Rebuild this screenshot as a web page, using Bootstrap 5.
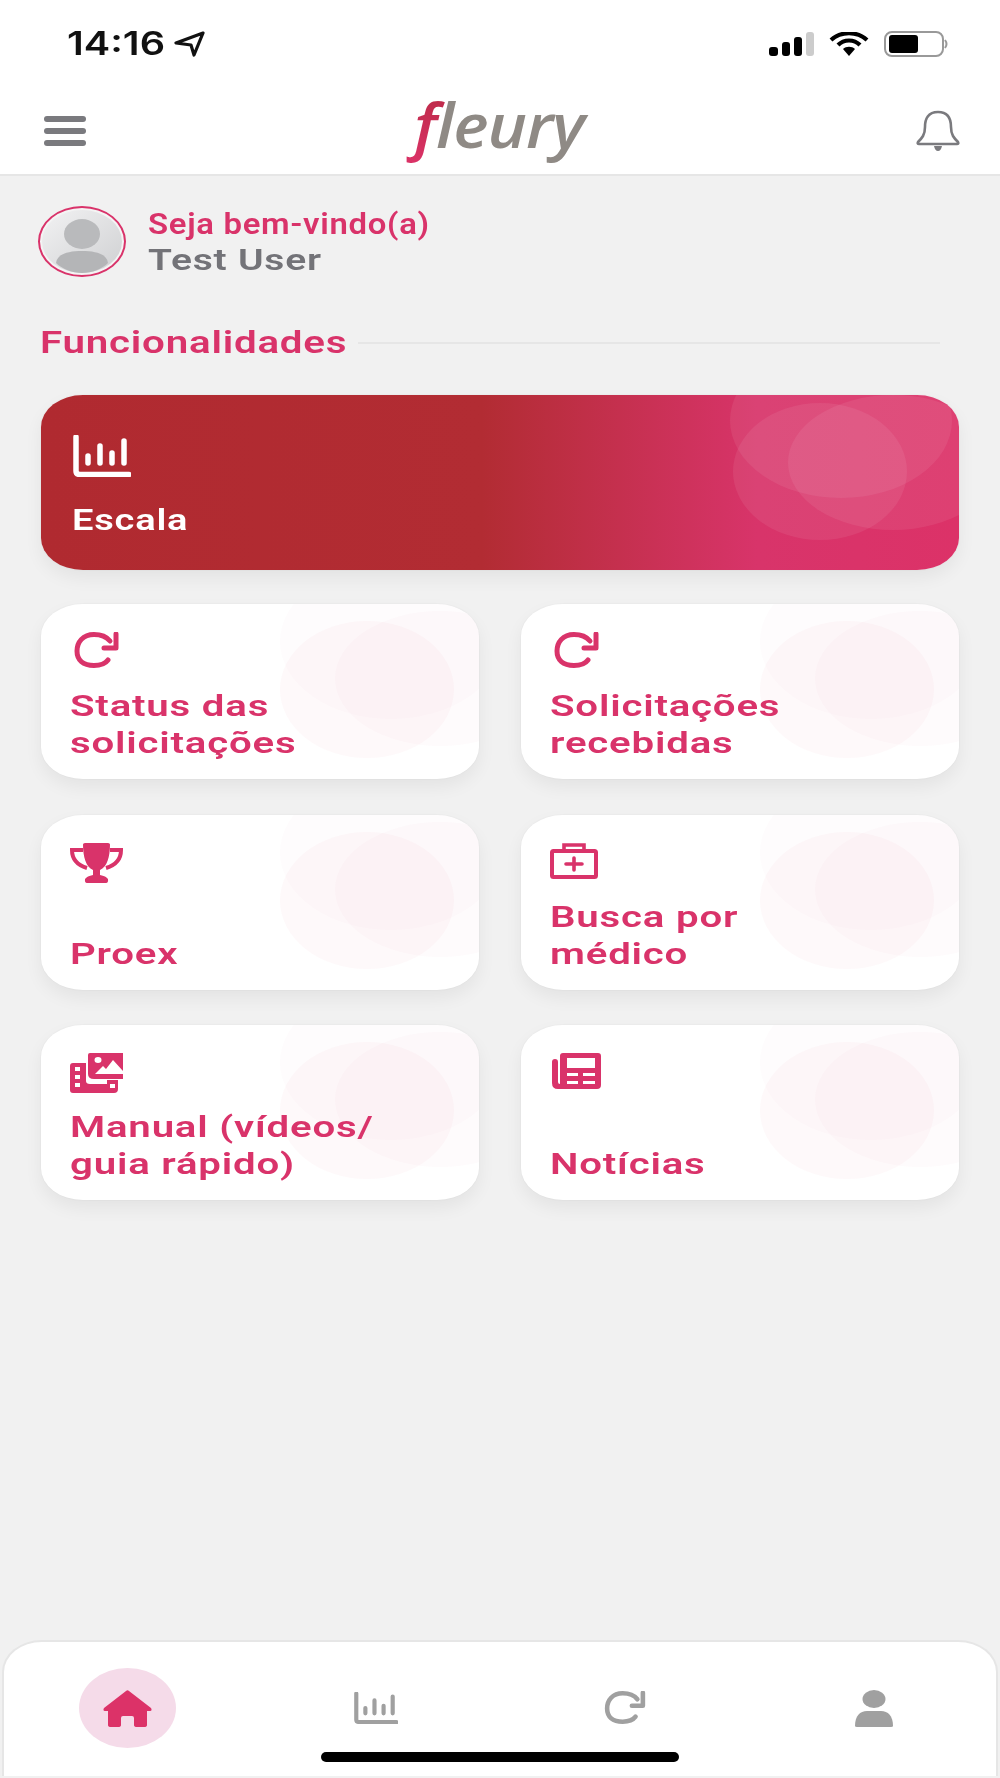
<!DOCTYPE html>
<html lang="pt-BR">
<head>
  <meta charset="UTF-8" />
  <meta name="viewport" content="width=device-width, initial-scale=1" />
  <title>Fleury</title>
  <link href="https://cdn.jsdelivr.net/npm/bootstrap@5.3.2/dist/css/bootstrap.min.css" rel="stylesheet">
  <style>
    html, body { height: 100%; }
    body { background-color: #f1f1f1; font-family: Roboto, "Noto Sans", sans-serif; }
    .app-screen { width: 1000px; height: 1778px; overflow: hidden; }

    .wide-text { display: block; font-weight: 600; white-space: nowrap; transform-origin: left center; letter-spacing: .6px; }

    .status-area { height: 88px; background: #fff; padding: 0 52px 0 67px; }
    .status-time { font-family: Inter, sans-serif; font-size: 32px; font-weight: 600; line-height: 1; color: #111; transform: scaleX(1.24); transform-origin: left center; width: 106px; }
    .status-icons { gap: 15px; }

    .top-bar { height: 88px; background: #fff; border-bottom: 2px solid #e6e6e6; padding: 0 39px 0 44px; }
    .menu-lines { width: 42px; display: flex; flex-direction: column; gap: 6px; }
    .menu-lines span { display: block; height: 6px; border-radius: 3px; background: #7a7a7e; }
    .logo-word { width: 176px; height: 64px; margin-left: 2px; font-family: "Open Sans", sans-serif; font-size: 62px; line-height: 50px; font-style: italic; font-weight: 600; color: #8f8a85; letter-spacing: -1px; white-space: nowrap; transform: scaleX(1.08); transform-origin: left center; }
    .logo-f { color: transparent; padding: 0 12px; margin: 0 -12px; background: linear-gradient(180deg, #b82a44 0%, #dc3268 100%); -webkit-background-clip: text; background-clip: text; }

    .page-main { padding: 30px 41px 0; }
    .welcome-row { margin-left: -3px; gap: 22px; }
    .avatar-ring { width: 88px; height: 71px; border: 2px solid #d9336a; border-radius: 50%; padding: 2px; background: #f4f4f4; }
    .avatar-ring svg { display: block; width: 100%; height: 100%; }
    .hello-line { color: #d9336a; font-size: 29px; line-height: 35px; transform: scaleX(1.135); }
    .name-line { color: #737378; font-size: 30px; line-height: 35px; transform: scaleX(1.3); }

    .section-row { margin-top: 48px; margin-bottom: 34px; margin-left: -1px; height: 36px; }
    .section-name { color: #d9336a; font-size: 31px; line-height: 36px; width: 318px; flex: none; transform: scaleX(1.3); }
    .section-rule { height: 2px; background: #e6e6e6; width: 582px; }

    .tile { height: 175px; border: 0; border-radius: 42px / 32px; box-shadow: 0 0 0 1px rgba(0,0,0,.015), 0 8px 18px rgba(0,0,0,.06); overflow: hidden; padding: 28px 29px 0; }
    .tile-main { background: linear-gradient(90deg, #b02a30 0%, #b22c33 48%, #d8346a 78%, #dc3268 100%); margin-bottom: 34px; padding-top: 40px; padding-left: 32px; }
    .tile-soft { background: #fff; color: #d9336a; }
    .tile-name { font-size: 30px; line-height: 37px; transform: scaleX(1.34); z-index: 1; }
    .tile-main .tile-name { color: #fff; position: absolute; left: 31px; bottom: 32px; transform: scaleX(1.27); }
    .tile-soft .tile-name { position: absolute; left: 29px; bottom: 18px; }
    .tile svg { position: relative; z-index: 1; display: block; }
    .blob { position: absolute; border-radius: 50%; }
    .tile-main .blob { background: rgba(255, 255, 255, .07); }
    .blob-a { width: 222px; height: 155px; right: 7px; top: -52px; }
    .blob-b { width: 174px; height: 137px; right: 52px; top: 8px; }
    .blob-c { width: 210px; height: 135px; right: -39px; top: 0; }
    .tile-soft .blob-a { width: 222px; right: -23px; top: -40px; background: rgba(217, 51, 106, .015); }
    .tile-soft .blob-b { right: 25px; top: 17px; background: rgba(217, 51, 106, .03); }
    .tile-soft .blob-c { right: -66px; top: 7px; background: rgba(217, 51, 106, .02); }

    .grid-tiles { --bs-gutter-x: 42px; --bs-gutter-y: 35.5px; }

    .tab-bar { height: 136px; margin: 0 2px 2px; background: #fff; border: 2px solid #e6e6e6; border-bottom-width: 0; border-radius: 40px 40px 0 0 / 32px 32px 0 0; }
    .tab-pill { left: 75px; top: 26px; width: 97px; height: 80px; background: #f5dbe9; border-radius: 50%; }
    .home-line { left: 317px; top: 110px; width: 358px; height: 10px; background: #000; border-radius: 5px; }
    .tab-icon { position: absolute; }
    .tab-grey { color: #a0a0a0; }
    .tab-home { left: 99px; top: 48px; }
    .tab-chart { left: 350px; top: 50px; }
    .tab-redo { left: 600px; top: 49px; }
    .tab-user { left: 851px; top: 48px; }
  </style>
</head>
<body>
  <svg width="0" height="0" class="position-absolute">
    <symbol id="ic-chart" viewBox="0 0 58 42">
      <path d="M3 2 V36 Q3 39.5 7 39.5 H56" fill="none" stroke="currentColor" stroke-width="5.5" stroke-linecap="round"/>
      <path d="M15 21 V28 M27 11 V28 M39 18 V28 M51 6 V28" fill="none" stroke="currentColor" stroke-width="5.5" stroke-linecap="round"/>
    </symbol>
    <symbol id="ic-refresh" viewBox="0 0 45 36">
      <path d="M36 9 C32 4 26 2.5 20 2.5 C9 2.5 3 10 3 19 C3 28 9 33.5 20 33.5 C26 33.5 31 32 34 28" fill="none" stroke="currentColor" stroke-width="5" stroke-linecap="round"/>
      <path d="M42 2 V16 H30" fill="none" stroke="currentColor" stroke-width="5" stroke-linecap="round" stroke-linejoin="round"/>
    </symbol>
  </svg>

  <div class="app-screen d-flex flex-column">
    <div class="status-area d-flex align-items-center justify-content-between">
      <div class="d-flex align-items-center">
        <span class="status-time">14:16</span>
        <svg width="32" height="26" viewBox="0 0 32 26"><path d="M30 2 L3 12 L18 14 L21 24 Z" fill="none" stroke="#111" stroke-width="3.2" stroke-linejoin="round"/></svg>
      </div>
      <div class="status-icons d-flex align-items-center">
        <svg width="45" height="24" viewBox="0 0 45 24">
          <rect x="0" y="15" width="9" height="9" rx="3"/><rect x="13" y="10" width="8" height="14" rx="3"/><rect x="25" y="5" width="8" height="19" rx="3"/><rect x="37" y="0" width="8" height="24" rx="3" fill="#ccc"/>
        </svg>
        <svg width="40" height="24" viewBox="0 0 40 24">
          <path d="M2 8 C12 -1 28 -1 38 8 M9 13 C15 7 25 7 31 13" fill="none" stroke="#000" stroke-width="4.2"/>
          <path d="M14 17 C17 14 23 14 26 17 L20 24 Z" fill="#000"/>
        </svg>
        <svg width="64" height="26" viewBox="0 0 64 26">
          <rect x="1" y="1" width="58" height="24" rx="7" fill="none" stroke="#999" stroke-width="2"/>
          <rect x="5" y="4" width="29" height="18" rx="3"/>
          <path d="M61 9 Q64 13 61 17" fill="none" stroke="#999" stroke-width="2"/>
        </svg>
      </div>
    </div>

    <nav class="navbar top-bar flex-nowrap">
      <div class="menu-lines"><span></span><span></span><span></span></div>
      <div class="logo-word"><span class="logo-f">f</span>leury</div>
      <svg width="46" height="42" viewBox="0 0 46 42">
        <path d="M23 2 C13 2 10 9 10 17 C10 25 7 28 3 32 Q2 34 4 34 H42 Q44 34 43 32 C39 28 36 25 36 17 C36 9 33 2 23 2 Z" fill="none" stroke="#7a7a7e" stroke-width="2.6"/>
        <path d="M19 36 H27 Q26 41 23 41 Q20 41 19 36 Z" fill="#7a7a7e"/>
      </svg>
    </nav>

    <main class="page-main flex-grow-1">
      <div class="welcome-row d-flex align-items-center">
        <div class="avatar-ring flex-shrink-0">
          <svg viewBox="0 0 80 63" preserveAspectRatio="none">
            <defs><linearGradient id="av" x1="0" y1="0" x2="1" y2="1"><stop offset="0" stop-color="#f2f2f3"/><stop offset="1" stop-color="#cfd0d2"/></linearGradient></defs>
            <ellipse cx="40" cy="31.5" rx="40" ry="31.5" fill="url(#av)"/>
            <ellipse cx="40" cy="24" rx="18" ry="15" fill="#b9babc"/>
            <path d="M14 53 C15 44 26 41 40 41 C54 41 65 44 66 53 C60 59 50 63 40 63 C30 63 20 59 14 53 Z" fill="#b4b5b7"/>
          </svg>
        </div>
        <div>
          <span class="wide-text hello-line">Seja bem-vindo(a)</span>
          <span class="wide-text name-line">Test User</span>
        </div>
      </div>

      <div class="section-row d-flex align-items-center">
        <span class="wide-text section-name">Funcionalidades</span>
        <div class="section-rule"></div>
      </div>

      <div class="card tile tile-main text-white">
        <i class="blob blob-a"></i><i class="blob blob-b"></i><i class="blob blob-c"></i>
        <svg width="58" height="42"><use href="#ic-chart"/></svg>
        <span class="wide-text tile-name">Escala</span>
      </div>

      <div class="row grid-tiles">
        <div class="col-6">
          <div class="card tile tile-soft">
            <i class="blob blob-a"></i><i class="blob blob-b"></i><i class="blob blob-c"></i>
            <svg width="45" height="36" class="ms-1"><use href="#ic-refresh"/></svg>
            <span class="wide-text tile-name">Status das<br>solicitações</span>
          </div>
        </div>
        <div class="col-6">
          <div class="card tile tile-soft">
            <i class="blob blob-a"></i><i class="blob blob-b"></i><i class="blob blob-c"></i>
            <svg width="45" height="36" class="ms-1"><use href="#ic-refresh"/></svg>
            <span class="wide-text tile-name">Solicitações<br>recebidas</span>
          </div>
        </div>
        <div class="col-6">
          <div class="card tile tile-soft">
            <i class="blob blob-a"></i><i class="blob blob-b"></i><i class="blob blob-c"></i>
            <svg width="53" height="40" viewBox="0 0 53 40">
              <path d="M13 1.5 Q13 0 15 0 H38 Q40 0 40 1.5 C40 14 37 24 30 27 V32 Q36 33 38 36 Q38.5 40 36 40 H17 Q14.5 40 15 36 Q17 33 23 32 V27 C16 24 13 14 13 1.5 Z" fill="currentColor"/>
              <path d="M13 7 H2 C2 16 7 22 17 25 M40 7 H51 C51 16 46 22 36 25" fill="none" stroke="currentColor" stroke-width="4"/>
            </svg>
            <span class="wide-text tile-name">Proex</span>
          </div>
        </div>
        <div class="col-6">
          <div class="card tile tile-soft">
            <i class="blob blob-a"></i><i class="blob blob-b"></i><i class="blob blob-c"></i>
            <svg width="48" height="36" viewBox="0 0 48 36">
              <path d="M14 8 V2 H34 V8" fill="none" stroke="currentColor" stroke-width="3.6"/>
              <rect x="2" y="8" width="44" height="26" rx="1.5" fill="none" stroke="currentColor" stroke-width="4"/>
              <path d="M24 15 V27 M16 21 H32" fill="none" stroke="currentColor" stroke-width="3.6" stroke-linecap="round"/>
            </svg>
            <span class="wide-text tile-name">Busca por<br>médico</span>
          </div>
        </div>
        <div class="col-6">
          <div class="card tile tile-soft">
            <i class="blob blob-a"></i><i class="blob blob-b"></i><i class="blob blob-c"></i>
            <svg width="53" height="40" viewBox="0 0 53 40">
              <path d="M20 0 H53 V26 H24 Q18 26 18 21 V2 Q18 0 20 0 Z" fill="currentColor"/>
              <path d="M25 21 L33 13 L36 16 L43 7 L53 18 V21 Z" fill="#fff"/>
              <ellipse cx="28" cy="7" rx="3.5" ry="3" fill="#fff"/>
              <path d="M3 10 H16 V28 Q16 31 20 31 H37 V27 H48 V36 Q48 40 44 40 H3 Q0 40 0 37 V13 Q0 10 3 10 Z" fill="currentColor"/>
              <path d="M5 14 H10 V18 H5 Z M5 22 H10 V26 H5 Z M5 30 H10 V34 H5 Z M40 31 H45 V35 H40 Z" fill="#fff"/>
            </svg>
            <span class="wide-text tile-name">Manual (vídeos/<br>guia rápido)</span>
          </div>
        </div>
        <div class="col-6">
          <div class="card tile tile-soft">
            <i class="blob blob-a"></i><i class="blob blob-b"></i><i class="blob blob-c"></i>
            <svg width="51" height="36" viewBox="-2 0 51 36">
              <path d="M11 0 H46 Q49 0 49 3 V32 Q49 36 45 36 H6 Q0 36 0 30 V9 Q0 6 3 6 Q6 6 6 9 V29 Q6 31 8 31 V3 Q8 0 11 0 Z" fill="currentColor"/>
              <path d="M15 5 H43 V15 H15 Z" fill="#fff"/>
              <path d="M15 20 H26 V23 H15 Z M31 20 H43 V23 H31 Z M15 28 H26 V31 H15 Z M31 28 H43 V31 H31 Z" fill="#fff"/>
            </svg>
            <span class="wide-text tile-name">Notícias</span>
          </div>
        </div>
      </div>
    </main>

    <div class="tab-bar position-relative flex-shrink-0">
      <span class="position-absolute tab-pill"></span>
      <svg class="tab-icon tab-home" width="49" height="38" viewBox="0 0 49 38">
        <path d="M23 1 Q24.5 -.5 26 1 L48 18 Q49.5 21 47 21 H44 V35 Q44 37 41 37 H34 Q31 37 31 35 V28 Q31 26 29 26 H20 Q18 26 18 28 V35 Q18 37 15 37 H8 Q5 37 5 35 V21 H2 Q-.5 21 1 18 Z" fill="#dc3268"/>
      </svg>
      <svg class="tab-icon tab-chart tab-grey" width="44" height="32"><use href="#ic-chart"/></svg>
      <svg class="tab-icon tab-redo tab-grey" width="42" height="33"><use href="#ic-refresh"/></svg>
      <svg class="tab-icon tab-user" width="38" height="38" viewBox="0 0 38 38">
        <ellipse cx="19" cy="9" rx="11.5" ry="9" fill="#a0a0a0"/>
        <path d="M0 36 C0 26 5 21 12 21 H26 C33 21 38 26 38 36 Q38 37 36 37 H2 Q0 37 0 36 Z" fill="#a0a0a0"/>
      </svg>
      <span class="position-absolute home-line"></span>
    </div>
  </div>

  <script src="https://cdn.jsdelivr.net/npm/bootstrap@5.3.2/dist/js/bootstrap.bundle.min.js"></script>
</body>
</html>
